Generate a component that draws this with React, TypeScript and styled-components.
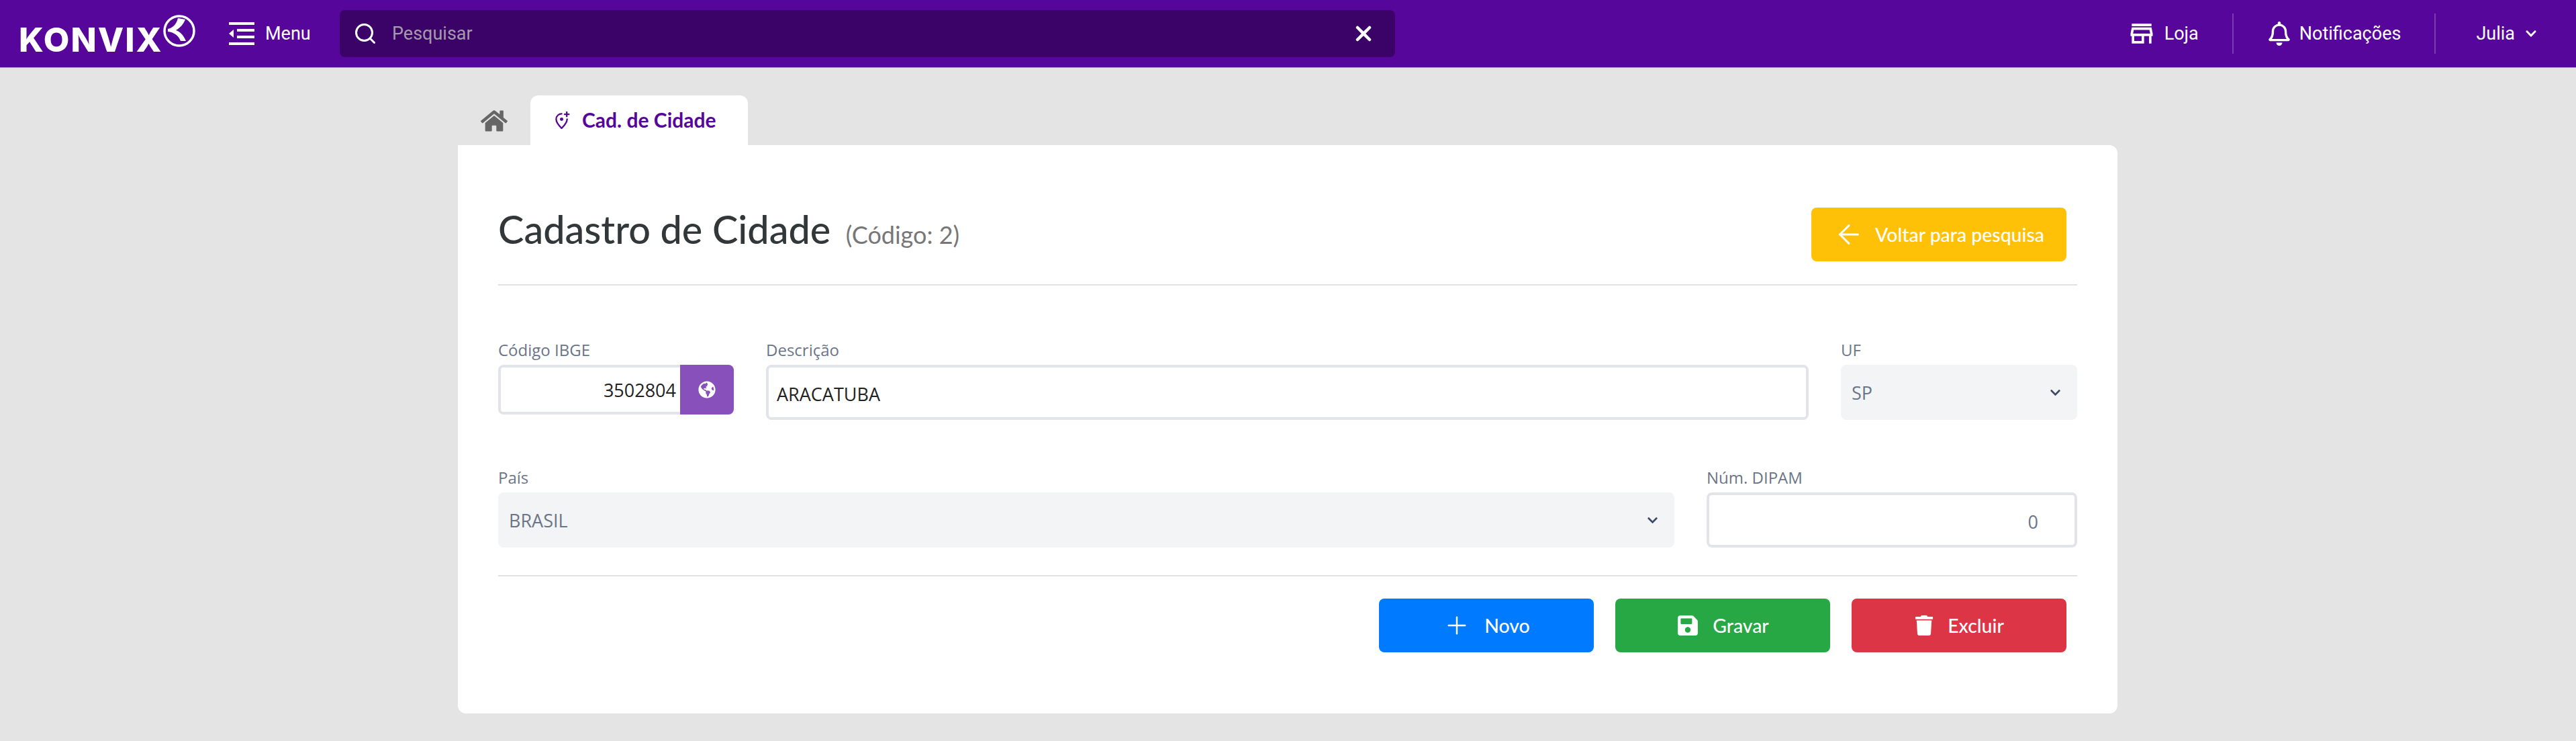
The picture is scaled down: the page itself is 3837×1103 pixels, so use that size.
import { createGlobalStyle, styled } from "styled-components";
import { Plus } from "lucide-react";
import { FaChevronDown, FaGlobeAmericas, FaHome, FaRegBell, FaSave, FaTrash } from "react-icons/fa";
import { FiArrowLeft, FiSearch, FiX } from "react-icons/fi";
import { MdOutlineStore } from "react-icons/md";

const GlobalStyle = createGlobalStyle`
  html, body { margin: 0; padding: 0; background: #e4e4e4; }
  * { box-sizing: border-box; }
`;

function App() {
  return (
    <>
      <GlobalStyle />
      <Page>
        <Header>
          <Brand>
            <BrandText>KONVIX</BrandText>
            <BrandMark viewBox="0 0 48 48">
              <circle cx="24" cy="24" r="22" fill="none" stroke="#fff" strokeWidth="3.5" />
              <path d="M22 5 L33 7 C30 14 26 19 19 23 C27 26 31 32 34 39 L26 39 C23 31 16 26 7 25 L7 21 C14 20 20 14 22 5 Z" fill="#fff" />
            </BrandMark>
          </Brand>
          <MenuButton>
            <MenuGlyph viewBox="0 0 38 34">
              <rect x="0" y="0" width="38" height="4" />
              <rect x="12" y="10" width="26" height="4" />
              <rect x="12" y="20" width="26" height="4" />
              <rect x="0" y="30" width="38" height="4" />
              <path d="M0 17 L7 11 L7 23 Z" />
            </MenuGlyph>
            Menu
          </MenuButton>
          <SearchBox>
            <FiSearch size={36} color="#fff" strokeWidth={2} />
            <SearchText>Pesquisar</SearchText>
            <FiX size={36} color="#fff" strokeWidth={3} />
          </SearchBox>
          <HeaderActions>
            <HeaderLink>
              <MdOutlineStore size={44} />
              Loja
            </HeaderLink>
            <HeaderDivider />
            <HeaderLink>
              <FaRegBell size={36} />
              Notificações
            </HeaderLink>
            <HeaderDivider />
            <UserLink>
              Julia
              <FaChevronDown size={18} />
            </UserLink>
          </HeaderActions>
        </Header>

        <Main>
          <Tabs>
            <HomeTab>
              <FaHome size={40} color="#666" />
            </HomeTab>
            <ActiveTab>
              <PinGlyph viewBox="0 0 24 28">
                <path d="M12 4.5 C6.5 4 2.5 8 2.5 13 C2.5 18 7 23 11 27 C15 23 19.5 18 19.5 13 L19.5 12" fill="none" stroke="#56069a" strokeWidth="2.4" />
                <circle cx="11" cy="13" r="2.6" fill="#56069a" />
                <path d="M19 1 V9.5 M14.7 5.2 H23.3" fill="none" stroke="#56069a" strokeWidth="2.4" />
              </PinGlyph>
              Cad. de Cidade
            </ActiveTab>
          </Tabs>
          <Card>
            <TitleRow>
              <Title>
                Cadastro de Cidade <Code>(Código: 2)</Code>
              </Title>
              <ActionButton $color="#ffc107" $wide>
                <FiArrowLeft size={46} strokeWidth={1.6} />
                Voltar para pesquisa
              </ActionButton>
            </TitleRow>
            <Fields>
              <FieldRow>
                <Field $width={351}>
                  <Label>Código IBGE</Label>
                  <InputGroup>
                    <GroupInput>3502804</GroupInput>
                    <GroupButton>
                      <FaGlobeAmericas size={26} />
                    </GroupButton>
                  </InputGroup>
                </Field>
                <Field $grow>
                  <Label>Descrição</Label>
                  <Input>ARACATUBA</Input>
                </Field>
                <Field $width={352}>
                  <Label>UF</Label>
                  <Select>
                    SP
                    <FaChevronDown size={17} color="#3d4a63" />
                  </Select>
                </Field>
              </FieldRow>
              <FieldRow>
                <Field $grow>
                  <Label>País</Label>
                  <Select>
                    BRASIL
                    <FaChevronDown size={17} color="#3d4a63" />
                  </Select>
                </Field>
                <Field $width={552}>
                  <Label>Núm. DIPAM</Label>
                  <NumberInput>0</NumberInput>
                </Field>
              </FieldRow>
            </Fields>
            <Footer>
              <ActionButton $color="#007bff">
                <Plus size={42} strokeWidth={1.4} />
                Novo
              </ActionButton>
              <ActionButton $color="#28a745">
                <FaSave size={34} />
                Gravar
              </ActionButton>
              <ActionButton $color="#dc3545">
                <FaTrash size={30} />
                Excluir
              </ActionButton>
            </Footer>
          </Card>
        </Main>
      </Page>
    </>
  );
}

const Page = styled.div`
  min-height: 1103px;
  background: #e4e4e4;
`;

const Header = styled.header`
  display: flex;
  align-items: center;
  height: 101px;
  padding: 0 58px 1px 28px;
  border-bottom: 1px solid #a98bc9;
  background: #56069a;
  color: #fff;
  font-family: Roboto, sans-serif;
  font-size: 27px;
`;

const Brand = styled.div`
  display: flex;
  align-items: flex-start;
  width: 313px;
  height: 48px;
  margin-top: -8px;
`;

const BrandText = styled.span`
  margin-top: 12px;
  font-family: Inter, sans-serif;
  font-size: 50px;
  font-weight: 800;
  line-height: 50px;
  letter-spacing: 2px;
`;

const BrandMark = styled.svg`
  flex: none;
  width: 48px;
  height: 48px;
`;

const MenuButton = styled.div`
  display: flex;
  align-items: center;
  gap: 16px;
  width: 165px;
`;

const MenuGlyph = styled.svg`
  width: 38px;
  height: 34px;
  fill: #fff;
`;

const SearchBox = styled.div`
  display: flex;
  align-items: center;
  gap: 22px;
  width: 1572px;
  height: 70px;
  padding: 0 29px 0 20px;
  border-radius: 8px;
  background: #3b0368;
`;

const SearchText = styled.span`
  flex: 1;
  color: #a49aac;
`;

const HeaderActions = styled.div`
  display: flex;
  align-items: center;
  margin-left: auto;
`;

const HeaderLink = styled.div`
  display: flex;
  align-items: center;
  gap: 12px;
  padding: 0 50px;
`;

const UserLink = styled(HeaderLink)`
  gap: 15px;
  padding: 0 0 0 60px;
`;

const HeaderDivider = styled.div`
  width: 2px;
  height: 60px;
  background: rgba(255, 255, 255, 0.22);
`;

const Main = styled.main`
  width: 2472px;
  margin-left: 682px;
`;

const Tabs = styled.div`
  display: flex;
  align-items: flex-end;
  height: 115px;
  padding-top: 41px;
`;

const HomeTab = styled.div`
  display: flex;
  justify-content: center;
  align-items: flex-start;
  width: 108px;
  height: 74px;
  padding-top: 18px;
`;

const ActiveTab = styled.div`
  display: flex;
  align-items: center;
  gap: 18px;
  width: 324px;
  height: 74px;
  padding: 0 0 2px 36px;
  border-radius: 12px 12px 0 0;
  background: #fff;
  color: #56069a;
  font-family: Lato, sans-serif;
  font-size: 30px;
  font-weight: 700;
`;

const PinGlyph = styled.svg`
  flex: none;
  width: 23px;
  height: 27px;
`;

const Card = styled.section`
  height: 846px;
  padding: 0 60px;
  border-radius: 0 12px 12px 12px;
  background: #fff;
`;

const TitleRow = styled.div`
  display: flex;
  justify-content: space-between;
  align-items: flex-end;
  height: 209px;
  padding: 0 16px 34px 0;
  border-bottom: 2px solid #e1e1e3;
`;

const Title = styled.h1`
  margin: 0 0 6px;
  color: #32373a;
  font-family: Lato, sans-serif;
  font-size: 57.6px;
  font-weight: 500;
  line-height: 68px;
`;

const Code = styled.small`
  margin-left: 8px;
  color: #777;
  font-size: 36px;
  font-weight: 400;
`;

const Fields = styled.div`
  display: flex;
  flex-direction: column;
  gap: 72px;
  padding-top: 82px;
`;

const FieldRow = styled.div`
  display: flex;
  align-items: flex-start;
  gap: 48px;
`;

const Field = styled.div<{ $width?: number; $grow?: boolean }>`
  display: flex;
  flex-direction: column;
  flex: ${(p) => (p.$grow ? "1" : `0 0 ${p.$width}px`)};
  min-width: 0;
`;

const Label = styled.label`
  height: 36px;
  color: #6b7588;
  font-family: "Open Sans", sans-serif;
  font-size: 24px;
  line-height: 28px;
`;

const InputGroup = styled.div`
  display: flex;
  height: 74px;
`;

const GroupInput = styled.div`
  display: flex;
  flex: 1;
  justify-content: flex-end;
  align-items: center;
  padding-right: 6px;
  border: 4px solid #e2e4ea;
  border-right: 0;
  border-radius: 8px 0 0 8px;
  color: #222;
  font-family: "Open Sans", sans-serif;
  font-size: 27px;
`;

const GroupButton = styled.div`
  display: flex;
  flex: 0 0 80px;
  justify-content: center;
  align-items: center;
  border-radius: 0 8px 8px 0;
  background: #8850ba;
  color: #fff;
`;

const Input = styled.div`
  display: flex;
  align-items: center;
  height: 82px;
  padding: 4px 12px 0;
  border: 4px solid #e2e4ea;
  border-radius: 8px;
  color: #222;
  font-family: "Open Sans", sans-serif;
  font-size: 27px;
`;

const NumberInput = styled(Input)`
  justify-content: flex-end;
  padding-right: 54px;
  color: #6b7588;
`;

const Select = styled.div`
  display: flex;
  justify-content: space-between;
  align-items: center;
  height: 82px;
  padding: 0 24px 0 16px;
  border-radius: 8px;
  background: #f3f4f6;
  color: #6b7588;
  font-family: "Open Sans", sans-serif;
  font-size: 27px;
`;

const Footer = styled.div`
  display: flex;
  justify-content: flex-end;
  gap: 32px;
  margin-top: 41px;
  padding: 33px 16px 0 0;
  border-top: 2px solid #e1e1e3;
`;

const ActionButton = styled.div<{ $color: string; $wide?: boolean }>`
  display: flex;
  justify-content: center;
  align-items: center;
  gap: ${(p) => (p.$wide ? "16px" : "20px")};
  width: ${(p) => (p.$wide ? "380px" : "320px")};
  height: 80px;
  border-radius: 8px;
  background: ${(p) => p.$color};
  color: #fff;
  font-family: Lato, sans-serif;
  font-size: 28.4px;
  font-weight: 500;
`;

export default App;
